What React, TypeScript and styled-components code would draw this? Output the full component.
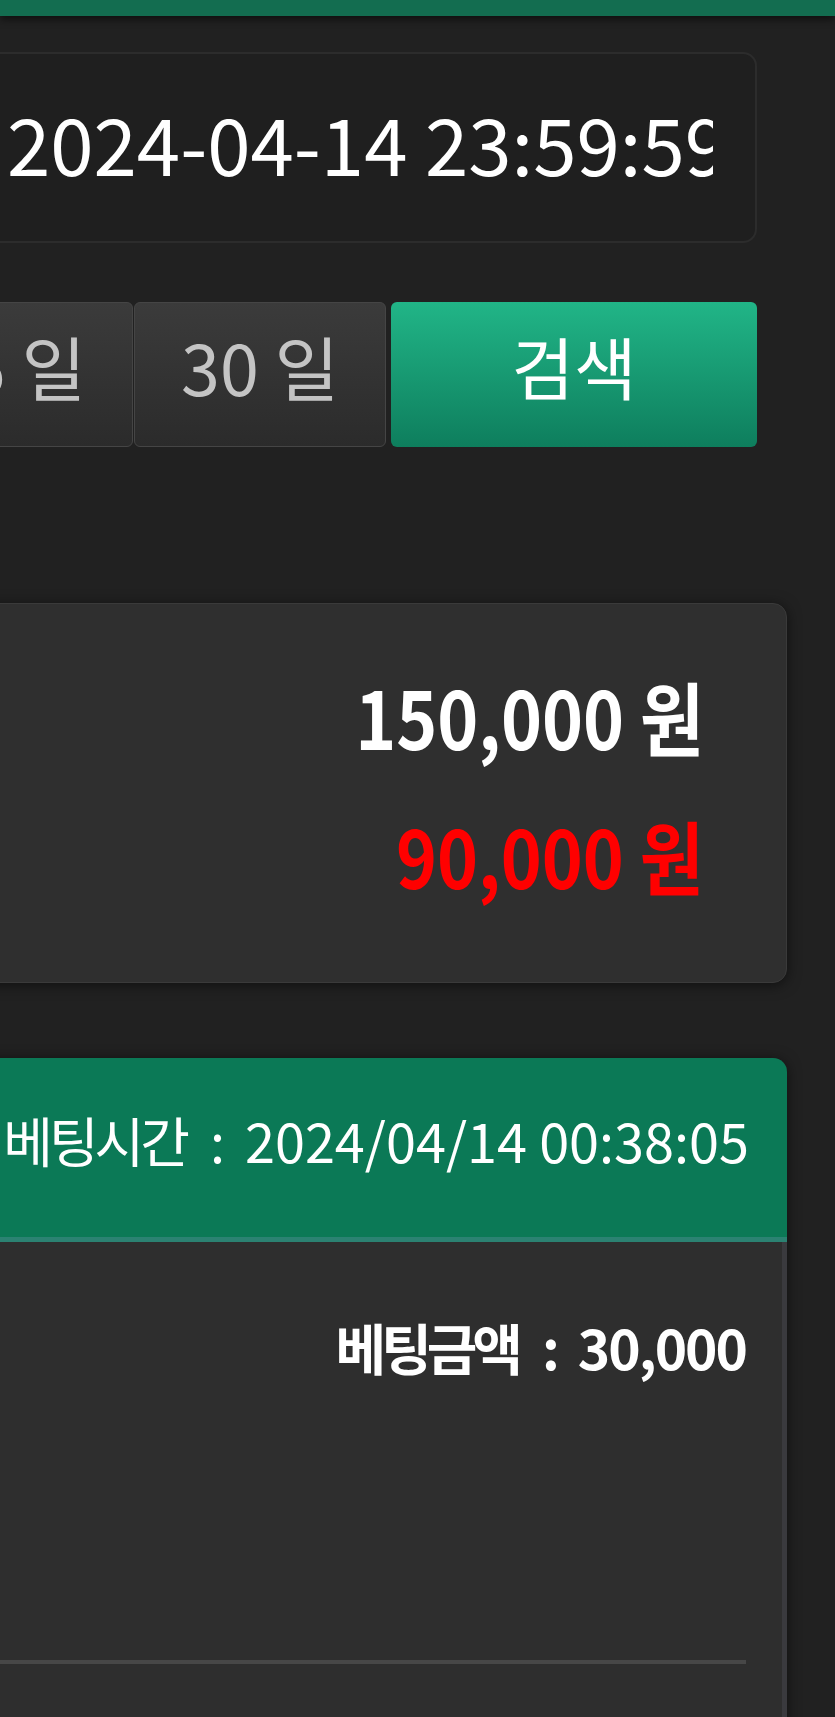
import styled, { createGlobalStyle } from "styled-components";

const GlobalStyle = createGlobalStyle`
  * {
    box-sizing: border-box;
  }
  html,
  body {
    margin: 0;
    padding: 0;
    background-color: #212121;
    overflow: hidden;
  }
  body {
    font-family: "Noto Sans CJK KR", "Noto Sans", sans-serif;
    color: #ffffff;
  }
`;

const Page = styled.div`
  width: 835px;
  height: 1717px;
  overflow: hidden;
`;

const TopBar = styled.div`
  height: 16px;
  background-color: #136d50;
  box-shadow: 0px 3px 8px rgba(0, 0, 0, 0.6);
  position: relative;
  z-index: 1;
`;

const Filter = styled.section`
  margin: 36px 78px 0px -37px;
  display: flex;
  flex-direction: column;
  gap: 59px;
`;

const DateField = styled.div`
  height: 191px;
  border: 2px solid #2c2c2c;
  border-radius: 14px;
  background-color: #1f1f1f;
  display: flex;
`;

const DateInput = styled.input`
  width: 100%;
  height: 100%;
  border: none;
  outline: none;
  background: transparent;
  color: #ffffff;
  font-family: "Noto Sans CJK KR", "Noto Sans", sans-serif;
  font-size: 78px;
  padding: 0px 42px 12px 42px;
`;

const ButtonRow = styled.div`
  height: 145px;
  display: flex;
  justify-content: flex-end;
  gap: 1px;
`;

const PeriodButton = styled.button`
  flex: 0 0 252px;
  height: 100%;
  border: 1px solid #454545;
  border-radius: 6px;
  background: linear-gradient(180deg, #3b3b3b 0%, #2b2b2b 100%);
  color: #c4c4c4;
  font-family: "Noto Sans CJK KR", "Noto Sans", sans-serif;
  font-size: 70px;
  padding: 0px 0px 18px 0px;
  white-space: nowrap;
`;

const SearchButton = styled.button`
  flex: 0 0 366px;
  margin-left: 4px;
  height: 100%;
  border: none;
  border-radius: 6px;
  background: linear-gradient(180deg, #21b587 0%, #0e7e5d 100%);
  color: #ffffff;
  font-family: "Noto Sans CJK KR", "Noto Sans", sans-serif;
  font-size: 68px;
  padding: 0px 0px 18px 0px;
`;

const SummaryCard = styled.section`
  margin: 156px 48px 0px -40px;
  height: 380px;
  border: 1px solid #3a3a3a;
  border-radius: 14px;
  background-color: #2f2f2f;
  box-shadow: 0px 2px 14px rgba(0, 0, 0, 0.55);
  display: flex;
  flex-direction: column;
  justify-content: center;
  align-items: flex-end;
  gap: 41px;
  padding: 0px 82px 18px 0px;
`;

const Amount = styled.div<{ $tone: "plain" | "minus" }>`
  font-size: 80px;
  font-weight: 700;
  line-height: 98px;
  color: ${(props) => (props.$tone === "minus" ? "#ff0000" : "#ffffff")};
  white-space: nowrap;
  transform: scaleX(0.87);
  transform-origin: right center;
`;

const BetCard = styled.section`
  margin: 75px 48px 0px -40px;
  border-radius: 14px 14px 0px 0px;
  box-shadow: 0px 2px 14px rgba(0, 0, 0, 0.55);
`;

const BetHeader = styled.header`
  height: 184px;
  border-radius: 14px 14px 0px 0px;
  border-bottom: 5px solid #2b8272;
  background-color: #0b7956;
  display: flex;
  align-items: center;
  justify-content: flex-end;
  padding: 0px 38px 16px 0px;
  font-size: 54px;
  white-space: nowrap;
`;

const BetBody = styled.div`
  background-color: #2e2e2e;
  border-right: 5px solid #3a3a3e;
  padding: 64px 36px 300px 0px;
  display: flex;
  flex-direction: column;
  align-items: flex-end;
`;

const StakeLine = styled.div`
  display: flex;
  align-items: center;
  font-size: 55px;
  font-weight: 700;
  line-height: 80px;
  white-space: nowrap;
`;

const Label = styled.span<{ $tight: number }>`
  letter-spacing: ${(props) => props.$tight}px;
`;

const Colon = styled.span<{ $before: number; $after: number }>`
  margin: 0px ${(props) => props.$after}px 0px ${(props) => props.$before}px;
`;

const Value = styled.span<{ $tight?: number }>`
  letter-spacing: ${(props) => props.$tight ?? 0}px;
`;

const Divider = styled.hr`
  align-self: stretch;
  margin: 274px 0px 0px 0px;
  border: none;
  height: 4px;
  background-color: #474747;
`;

export default function App() {
  return (
    <Page>
      <GlobalStyle />
      <TopBar />
      <Filter>
        <DateField>
          <DateInput type="text" defaultValue="2024-04-14 23:59:59" readOnly />
        </DateField>
        <ButtonRow>
          <PeriodButton>15 일</PeriodButton>
          <PeriodButton>30 일</PeriodButton>
          <SearchButton>검색</SearchButton>
        </ButtonRow>
      </Filter>
      <SummaryCard>
        <Amount $tone="plain">150,000 원</Amount>
        <Amount $tone="minus">90,000 원</Amount>
      </SummaryCard>
      <BetCard>
        <BetHeader>
          <Label $tight={-4}>베팅시간</Label>
          <Colon $before={24} $after={20}>:</Colon>
          <Value>2024/04/14 00:38:05</Value>
        </BetHeader>
        <BetBody>
          <StakeLine>
            <Label $tight={-5}>베팅금액</Label>
            <Colon $before={24} $after={18}>:</Colon>
            <Value $tight={-2}>30,000</Value>
          </StakeLine>
          <Divider />
        </BetBody>
      </BetCard>
    </Page>
  );
}
